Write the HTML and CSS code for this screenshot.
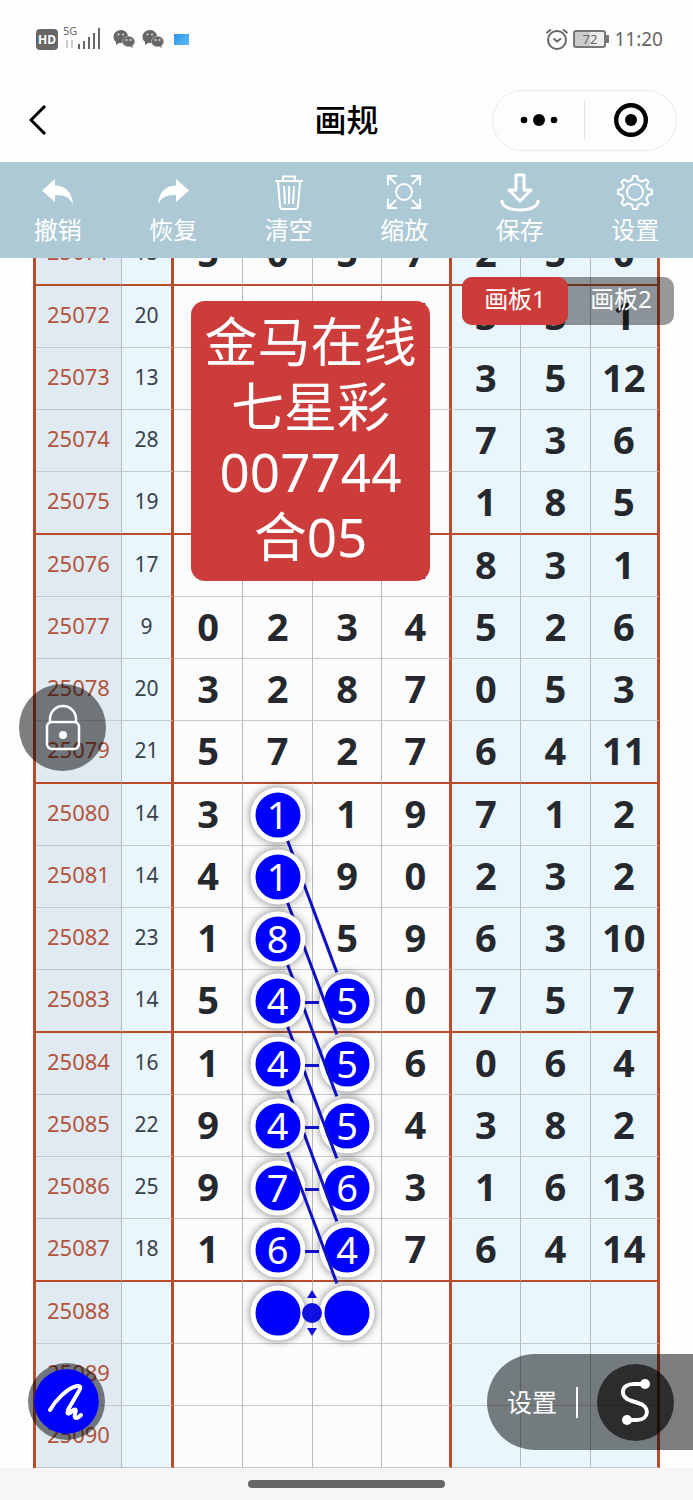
FILE: index.html
```html
<!DOCTYPE html>
<html lang="zh-CN">
<head>
  <meta charset="UTF-8" />
  <meta name="viewport" content="width=device-width, initial-scale=1.0"/>
  <title>画规</title>
  <link rel="stylesheet" href="styles.css">
</head>
<body>

<div class="app">
  <!-- Status bar -->
  <div class="status">
    <div class="status-left">
      <span class="hd">HD</span>
      <span class="signal">
        <span class="net">5G</span>
        <svg width="38" height="24" viewBox="0 0 38 24">
          <path d="M4 13v8M9 13v8" stroke="#ccc" stroke-width="2"/>
          <path d="M16 17v5M21 14v8M26 10v12M31 6v16M36 1v21" stroke="#666" stroke-width="2"/>
        </svg>
      </span>
      <svg class="chat" width="22" height="20" viewBox="0 0 22 20">
        <path d="M8 1c4 0 7 3 7 6.500s-3 6.500-7 6.500l-2 0-3 2 0-3C1.500 11.800.5 10 .5 7.500.5 4 4 1 8 1z" fill="#666"/>
        <path d="M15.500 7.500c3.500 0 6 2.200 6 5 0 1.800-.8 3-2 4v2l-2-1h-2c-3.500 0-6-2.200-6-5s2.500-5 6-5z" fill="#666" stroke="#aaa"/>
        <path d="M5.500 5.500h.1M10 5.500h.1M13.500 11h.1M17.500 11h.1" stroke="#ddd" stroke-width="2" stroke-linecap="round"/>
      </svg>
      <svg class="chat" width="22" height="20" viewBox="0 0 22 20">
        <path d="M8 1c4 0 7 3 7 6.500s-3 6.500-7 6.500l-2 0-3 2 0-3C1.500 11.800.5 10 .5 7.500.5 4 4 1 8 1z" fill="#666"/>
        <path d="M15.500 7.500c3.500 0 6 2.200 6 5 0 1.800-.8 3-2 4v2l-2-1h-2c-3.500 0-6-2.200-6-5s2.500-5 6-5z" fill="#666" stroke="#aaa"/>
        <path d="M5.500 5.500h.1M10 5.500h.1M13.500 11h.1M17.500 11h.1" stroke="#ddd" stroke-width="2" stroke-linecap="round"/>
      </svg>
      <span class="notice"></span>
    </div>
    <div class="status-right">
      <svg width="24" height="22" viewBox="0 0 24 22" fill="none" stroke="#666" stroke-width="2">
        <circle cx="12" cy="12" r="9"/>
        <path d="M8.500 10.500l3.500 3 4-3M1.500 5L6 1.500M22.500 5L18 1.500"/>
      </svg>
      <span class="battery">72</span>
      <span class="time">11:20</span>
    </div>
  </div>

  <!-- Title bar -->
  <header class="nav">
    <button class="back" aria-label="返回">
      <svg width="18" height="30" viewBox="0 0 18 30" fill="none" stroke="#000" stroke-width="3"><path d="M16 1L2 15l14 14"/></svg>
    </button>
    <h1>画规</h1>
    <div class="capsule">
      <button aria-label="更多">
        <svg width="38" height="14" viewBox="0 0 38 14"><circle cx="4" cy="7" r="3.300"/><circle cx="19" cy="7" r="6"/><circle cx="34" cy="7" r="3.300"/></svg>
      </button>
      <button aria-label="关闭">
        <svg width="34" height="34" viewBox="0 0 34 34"><circle cx="17" cy="17" r="14.800" fill="none" stroke="#000" stroke-width="4.400"/><circle cx="17" cy="17" r="6"/></svg>
      </button>
    </div>
  </header>

  <!-- Toolbar -->
  <div class="toolbar">
    <button>
      <svg width="40" height="40" viewBox="0 0 40 40" fill="#fff"><path d="M4 18.500L17 7v6.500c10 .5 17 6 18 18.500-4-7-9-9.500-18-9V30z"/></svg>
      <span>撤销</span>
    </button>
    <button>
      <svg width="40" height="40" viewBox="0 0 40 40" fill="#fff"><path d="M36 18.500L23 7v6.500C13 14 6 19.500 5 32c4-7 9-9.500 18-9V30z"/></svg>
      <span>恢复</span>
    </button>
    <button>
      <svg width="40" height="40" viewBox="0 0 40 40" fill="none" stroke="#fff" stroke-width="2">
        <path d="M6 9h28M14 8.500V4.500h12v4M9 10l2 24c.1 2 1 3 3 3h12c2 0 2.900-1 3-3l2-24M15 14l1 18M20 14v18M25 14l-1 18"/>
      </svg>
      <span>清空</span>
    </button>
    <button>
      <svg width="40" height="40" viewBox="0 0 40 40" fill="none" stroke="#fff" stroke-width="2">
        <circle cx="20" cy="20" r="8"/>
        <path d="M4 13V4h9M27 4h9v9M36 27v9h-9M13 36H4v-9M4 4l8 8M36 4l-8 8M36 36l-8-8M4 36l8-8"/>
      </svg>
      <span>缩放</span>
    </button>
    <button>
      <svg width="40" height="40" viewBox="0 0 40 40" fill="none" stroke="#fff" stroke-width="3" stroke-linejoin="round" stroke-linecap="round">
        <path d="M16 3h8v15h7L20 29 9 18h7z"/><path d="M2 29c0 5 7 9 18 9s18-4 18-9"/>
      </svg>
      <span>保存</span>
    </button>
    <button>
      <svg width="40" height="40" viewBox="0 0 40 40" fill="none" stroke="#fff" stroke-width="2" stroke-linejoin="round">
        <circle cx="20" cy="20" r="8"/>
        <path d="M17 8l1-4h4l1 4 4 1.700 4-2.200 2.500 2.500-2.200 4L33 17l4 1v4l-4 1-1.700 4 2.200 4-2.500 2.500-4-2.200L23 33l-1 4h-4l-1-4-4-1.700-4 2.200L6.500 31l2.200-4L7 23l-4-1v-4l4-1 1.700-3-2.200-4L9 7.500l4 2.200z"/>
      </svg>
      <span>设置</span>
    </button>
  </div>

  <!-- Board -->
  <main class="board">
    <table class="draws">
      <colgroup>
        <col class="col-issue"><col class="col-sum">
        <col><col><col><col><col><col><col>
      </colgroup>
      <tbody id="rows"></tbody>
    </table>

    <div class="tabs">
      <button class="active">画板1</button>
      <button>画板2</button>
    </div>

    <div class="note">金马在线<br>七星彩<br>007744<br>合05</div>

    <button class="lock" aria-label="锁定">
      <svg width="36" height="48" viewBox="0 0 36 48" fill="none" stroke="#fff" stroke-width="2.500">
        <rect x="2" y="18" width="32" height="27" rx="5"/>
        <path d="M5 18v-3a13 13 0 0 1 26 0v3"/>
        <circle cx="18" cy="31" r="4" fill="#fff" stroke="none"/>
      </svg>
    </button>

    <button class="pen" aria-label="画笔">
      <svg width="40" height="40" viewBox="0 0 40 40" fill="none" stroke="#fff" stroke-width="4" stroke-linecap="round" stroke-linejoin="round">
        <path d="M3 28C8 19 20 6 30 4c4-.5 4 2 2 5L22 26c-3 6-1 7 2 4 4-4 6-3 4 2-1.500 4 1 6 6 1"/>
      </svg>
    </button>

    <div class="line-tool">
      <button class="line-set">设置</button>
      <button class="line-type" aria-label="曲线">
        <svg width="32" height="48" viewBox="0 0 32 48" fill="none" stroke="#fff" stroke-width="4">
          <path d="M23 6H14C0 6-1 20 12 23l6 2c13 3 11 17-1 17H7"/>
          <circle cx="25" cy="6" r="5" fill="#fff" stroke="none"/>
          <circle cx="7" cy="42" r="5" fill="#fff" stroke="none"/>
        </svg>
      </button>
    </div>
  </main>

  <div class="home"><span></span></div>
</div>

<script>
  // issue, sum, seven numbers
  const draws = [
    [25071, 15, 5, 0, 5, 7, 2, 5, 0],
    [25072, 20, "", "", "", 7, 3, 3, 1],
    [25073, 13, "", "", "", "", 3, 5, 12],
    [25074, 28, "", "", "", "", 7, 3, 6],
    [25075, 19, "", "", "", "", 1, 8, 5],
    [25076, 17, "", "", "", 2, 8, 3, 1],
    [25077, 9, 0, 2, 3, 4, 5, 2, 6],
    [25078, 20, 3, 2, 8, 7, 0, 5, 3],
    [25079, 21, 5, 7, 2, 7, 6, 4, 11],
    [25080, 14, 3, 1, 1, 9, 7, 1, 2],
    [25081, 14, 4, 1, 9, 0, 2, 3, 2],
    [25082, 23, 1, 8, 5, 9, 6, 3, 10],
    [25083, 14, 5, 4, 5, 0, 7, 5, 7],
    [25084, 16, 1, 4, 5, 6, 0, 6, 4],
    [25085, 22, 9, 4, 5, 4, 3, 8, 2],
    [25086, 25, 9, 7, 6, 3, 1, 6, 13],
    [25087, 18, 1, 6, 4, 7, 6, 4, 14],
    [25088, "", "", "", "", "", "", "", ""],
    [25089, "", "", "", "", "", "", "", ""],
    [25090, "", "", "", "", "", "", "", ""]
  ];

  const link = '<svg class="link" viewBox="0 0 100 100" preserveAspectRatio="none"><path d="M0 0L86 86"/></svg>';
  const handle = '<svg class="handle" viewBox="0 0 20 50"><circle cx="10" cy="25" r="10"/><path d="M10 2l5 8H5zM10 48l5-8H5z"/></svg>';

  function cell(issue, value, col) {
    const last = 25088;
    let extra = "";
    if (col === 3 && issue >= 25080 && issue <= last) {
      const starts = issue <= 25085;
      if (starts) extra += link;
      if (issue >= 25083 && issue < last) extra += '<i class="dash"></i>';
      if (issue === last) extra += handle;
      return `<td><span class="ball${starts ? " start" : ""}">${value}</span>${extra}</td>`;
    }
    if (col === 4 && issue >= 25083 && issue <= last) {
      return `<td><span class="ball">${value}</span></td>`;
    }
    return `<td>${value}</td>`;
  }

  document.getElementById("rows").innerHTML = draws.map(row =>
    `<tr class="${row[0] % 4 === 3 ? "group-end" : ""}">` +
    row.map((value, col) => cell(row[0], value, col)).join("") +
    "</tr>"
  ).join("");
</script>

</body>
</html>
```
FILE: styles.css
```css
* {
  margin: 0;
  padding: 0;
  box-sizing: border-box;
}

body {
  background: #fdfdfd;
  font-family: "Noto Sans", "Noto Sans CJK SC", sans-serif;
}

button {
  background: none;
  border: none;
  font: inherit;
  color: inherit;
  cursor: pointer;
}

.app {
  height: 100vh;
  display: flex;
  flex-direction: column;
  overflow: hidden;
}

/* status bar */
.status {
  height: 78px;
  flex: none;
  padding: 0 30px 0 36px;
  display: flex;
  align-items: center;
  justify-content: space-between;
  color: #666;
}

.status-left,
.status-right {
  display: flex;
  align-items: center;
}

.status-right {
  gap: 4px;
}

.hd {
  width: 22px;
  height: 21px;
  border-radius: 4px;
  background: #666;
  color: #fff;
  font-size: 12px;
  font-weight: bold;
  line-height: 21px;
  text-align: center;
}

.signal {
  position: relative;
  height: 24px;
  margin: 0 12px 0 5px;
}

.net {
  position: absolute;
  left: 0;
  top: -3px;
  font-size: 11px;
  line-height: 14px;
}

.chat {
  margin-right: 7px;
}

.notice {
  width: 15px;
  height: 11px;
  margin-left: 3px;
  background: linear-gradient(135deg, #2f96e8, #5cbcf8);
}

.battery {
  position: relative;
  width: 33px;
  height: 18px;
  margin-right: 4px;
  border: 2px solid #777;
  border-radius: 3px;
  background: linear-gradient(to right, #ccc 50%, #eee 50%);
  font-size: 13px;
  line-height: 14px;
  text-align: center;
}

.battery::after {
  content: "";
  position: absolute;
  right: -5px;
  top: 3px;
  width: 3px;
  height: 8px;
  background: #777;
}

.time {
  font-size: 19px;
  line-height: 24px;
}

/* title bar */
.nav {
  height: 84px;
  flex: none;
  padding: 0 16px 0 28px;
  display: grid;
  grid-template-columns: 1fr auto 1fr;
  align-items: center;
}

.back {
  width: 20px;
  height: 30px;
}

.nav h1 {
  font-size: 32px;
  font-weight: 500;
  line-height: 40px;
  margin-right: 12px;
}

.capsule {
  justify-self: end;
  width: 185px;
  height: 61px;
  border: 1px solid #e8e8e8;
  border-radius: 31px;
  display: flex;
  align-items: center;
}

.capsule button {
  flex: 1;
  height: 40px;
  display: flex;
  align-items: center;
  justify-content: center;
}

.capsule button + button {
  border-left: 1px solid #e4e4e4;
}

/* toolbar */
.toolbar {
  height: 96px;
  flex: none;
  background: #adc9d5;
  color: #fff;
  display: flex;
}

.toolbar button {
  flex: 1;
  padding-top: 10px;
  display: flex;
  flex-direction: column;
  align-items: center;
  font-size: 24px;
  line-height: 36px;
}

.toolbar svg {
  flex: none;
}

/* board: the newest rows stay at the bottom */
.board {
  flex: 1;
  min-height: 0;
  position: relative;
  padding: 0 33px;
  display: flex;
  align-items: flex-end;
  overflow: hidden;
}

.draws {
  width: 100%;
  table-layout: fixed;
  border-collapse: separate;
  border-spacing: 0;
  border-left: 3px solid #b84d2e;
}

.col-issue {
  width: 86px;
}

.col-sum {
  width: 52px;
}

.draws td {
  position: relative;
  height: 62px;
  padding-bottom: 3px;
  border-right: 1px solid #b4babd;
  border-bottom: 1px solid #c4c9cb;
  background: #e9f6fd;
  color: #25282c;
  font-size: 38px;
  font-weight: bold;
  line-height: 50px;
  text-align: center;
}

.draws .group-end td {
  height: 63px;
  border-bottom: 2px solid #b84d2e;
}

.draws td:nth-child(1) {
  padding-bottom: 5px;
  background: #dfeaf2;
  color: #b4533c;
  font-size: 22px;
  font-weight: normal;
}

.draws td:nth-child(2) {
  color: #37414a;
  font-size: 21px;
  font-weight: normal;
}

.draws td:nth-child(n+3):nth-child(-n+6) {
  background: #fcfcfc;
}

.draws td:nth-child(2),
.draws td:nth-child(6),
.draws td:nth-child(9) {
  border-right: 3px solid #b84d2e;
}

/* marks drawn on the board */
.ball {
  position: absolute;
  left: 50%;
  top: 50%;
  z-index: 1;
  width: 55px;
  height: 55px;
  transform: translate(-50%, -50%);
  border: 5px solid #fff;
  border-radius: 50%;
  background: #00f;
  box-shadow: 0 0 8px rgba(0, 0, 0, 0.5);
  color: #fff;
  font-weight: normal;
  line-height: 43px;
}

.ball.start {
  z-index: 3;
}

.link {
  position: absolute;
  left: 50%;
  top: 50%;
  z-index: 2;
  width: 100%;
  height: 300%;
  pointer-events: none;
}

.link path {
  fill: none;
  stroke: #1010c4;
  stroke-width: 3;
  vector-effect: non-scaling-stroke;
}

.dash {
  position: absolute;
  right: -7px;
  top: 50%;
  z-index: 4;
  width: 14px;
  height: 3px;
  background: #1010c4;
}

.handle {
  position: absolute;
  right: -10px;
  top: 6px;
  z-index: 4;
  width: 20px;
  height: 50px;
  fill: #1010e0;
}

/* floating controls */
.tabs {
  position: absolute;
  top: 19px;
  right: 19px;
  z-index: 5;
  display: flex;
  border-radius: 10px;
  background: rgba(0, 0, 0, 0.4);
  color: #fff;
}

.tabs button {
  width: 106px;
  height: 48px;
  padding-bottom: 4px;
  border-radius: 10px;
  font-size: 24px;
  line-height: 32px;
}

.tabs .active {
  background: #cc3c3a;
}

.note {
  position: absolute;
  left: 191px;
  top: 43px;
  z-index: 5;
  width: 239px;
  padding: 8px 0 12px;
  border-radius: 14px;
  background: #cc3c3a;
  color: #fff;
  font-size: 53px;
  line-height: 65px;
  text-align: center;
}

.lock {
  position: absolute;
  left: 19px;
  bottom: 697px;
  z-index: 5;
  width: 87px;
  height: 87px;
  border-radius: 50%;
  background: rgba(0, 0, 0, 0.5);
  display: flex;
  align-items: center;
  justify-content: center;
}

.pen {
  position: absolute;
  left: 28px;
  bottom: 28px;
  z-index: 5;
  width: 77px;
  height: 77px;
  border: 6px solid rgba(0, 0, 0, 0.5);
  border-radius: 50%;
  background: #00f;
  background-clip: padding-box;
  display: flex;
  align-items: center;
  justify-content: center;
}

.line-tool {
  position: absolute;
  right: 0;
  bottom: 18px;
  z-index: 5;
  height: 96px;
  padding: 0 19px 0 20px;
  border-radius: 48px 0 0 48px;
  background: rgba(0, 0, 0, 0.5);
  color: #fff;
  display: flex;
  align-items: center;
  gap: 19px;
}

.line-set {
  padding-right: 19px;
  border-right: 2px solid #fff;
  font-size: 25px;
  line-height: 31px;
}

.line-type {
  width: 77px;
  height: 77px;
  border-radius: 50%;
  background: rgba(0, 0, 0, 0.64);
  display: flex;
  align-items: center;
  justify-content: center;
}

/* home indicator */
.home {
  height: 32px;
  flex: none;
  background: #f6f6f6;
  display: flex;
  align-items: center;
  justify-content: center;
}

.home span {
  width: 197px;
  height: 8px;
  border-radius: 4px;
  background: #666;
}
```
